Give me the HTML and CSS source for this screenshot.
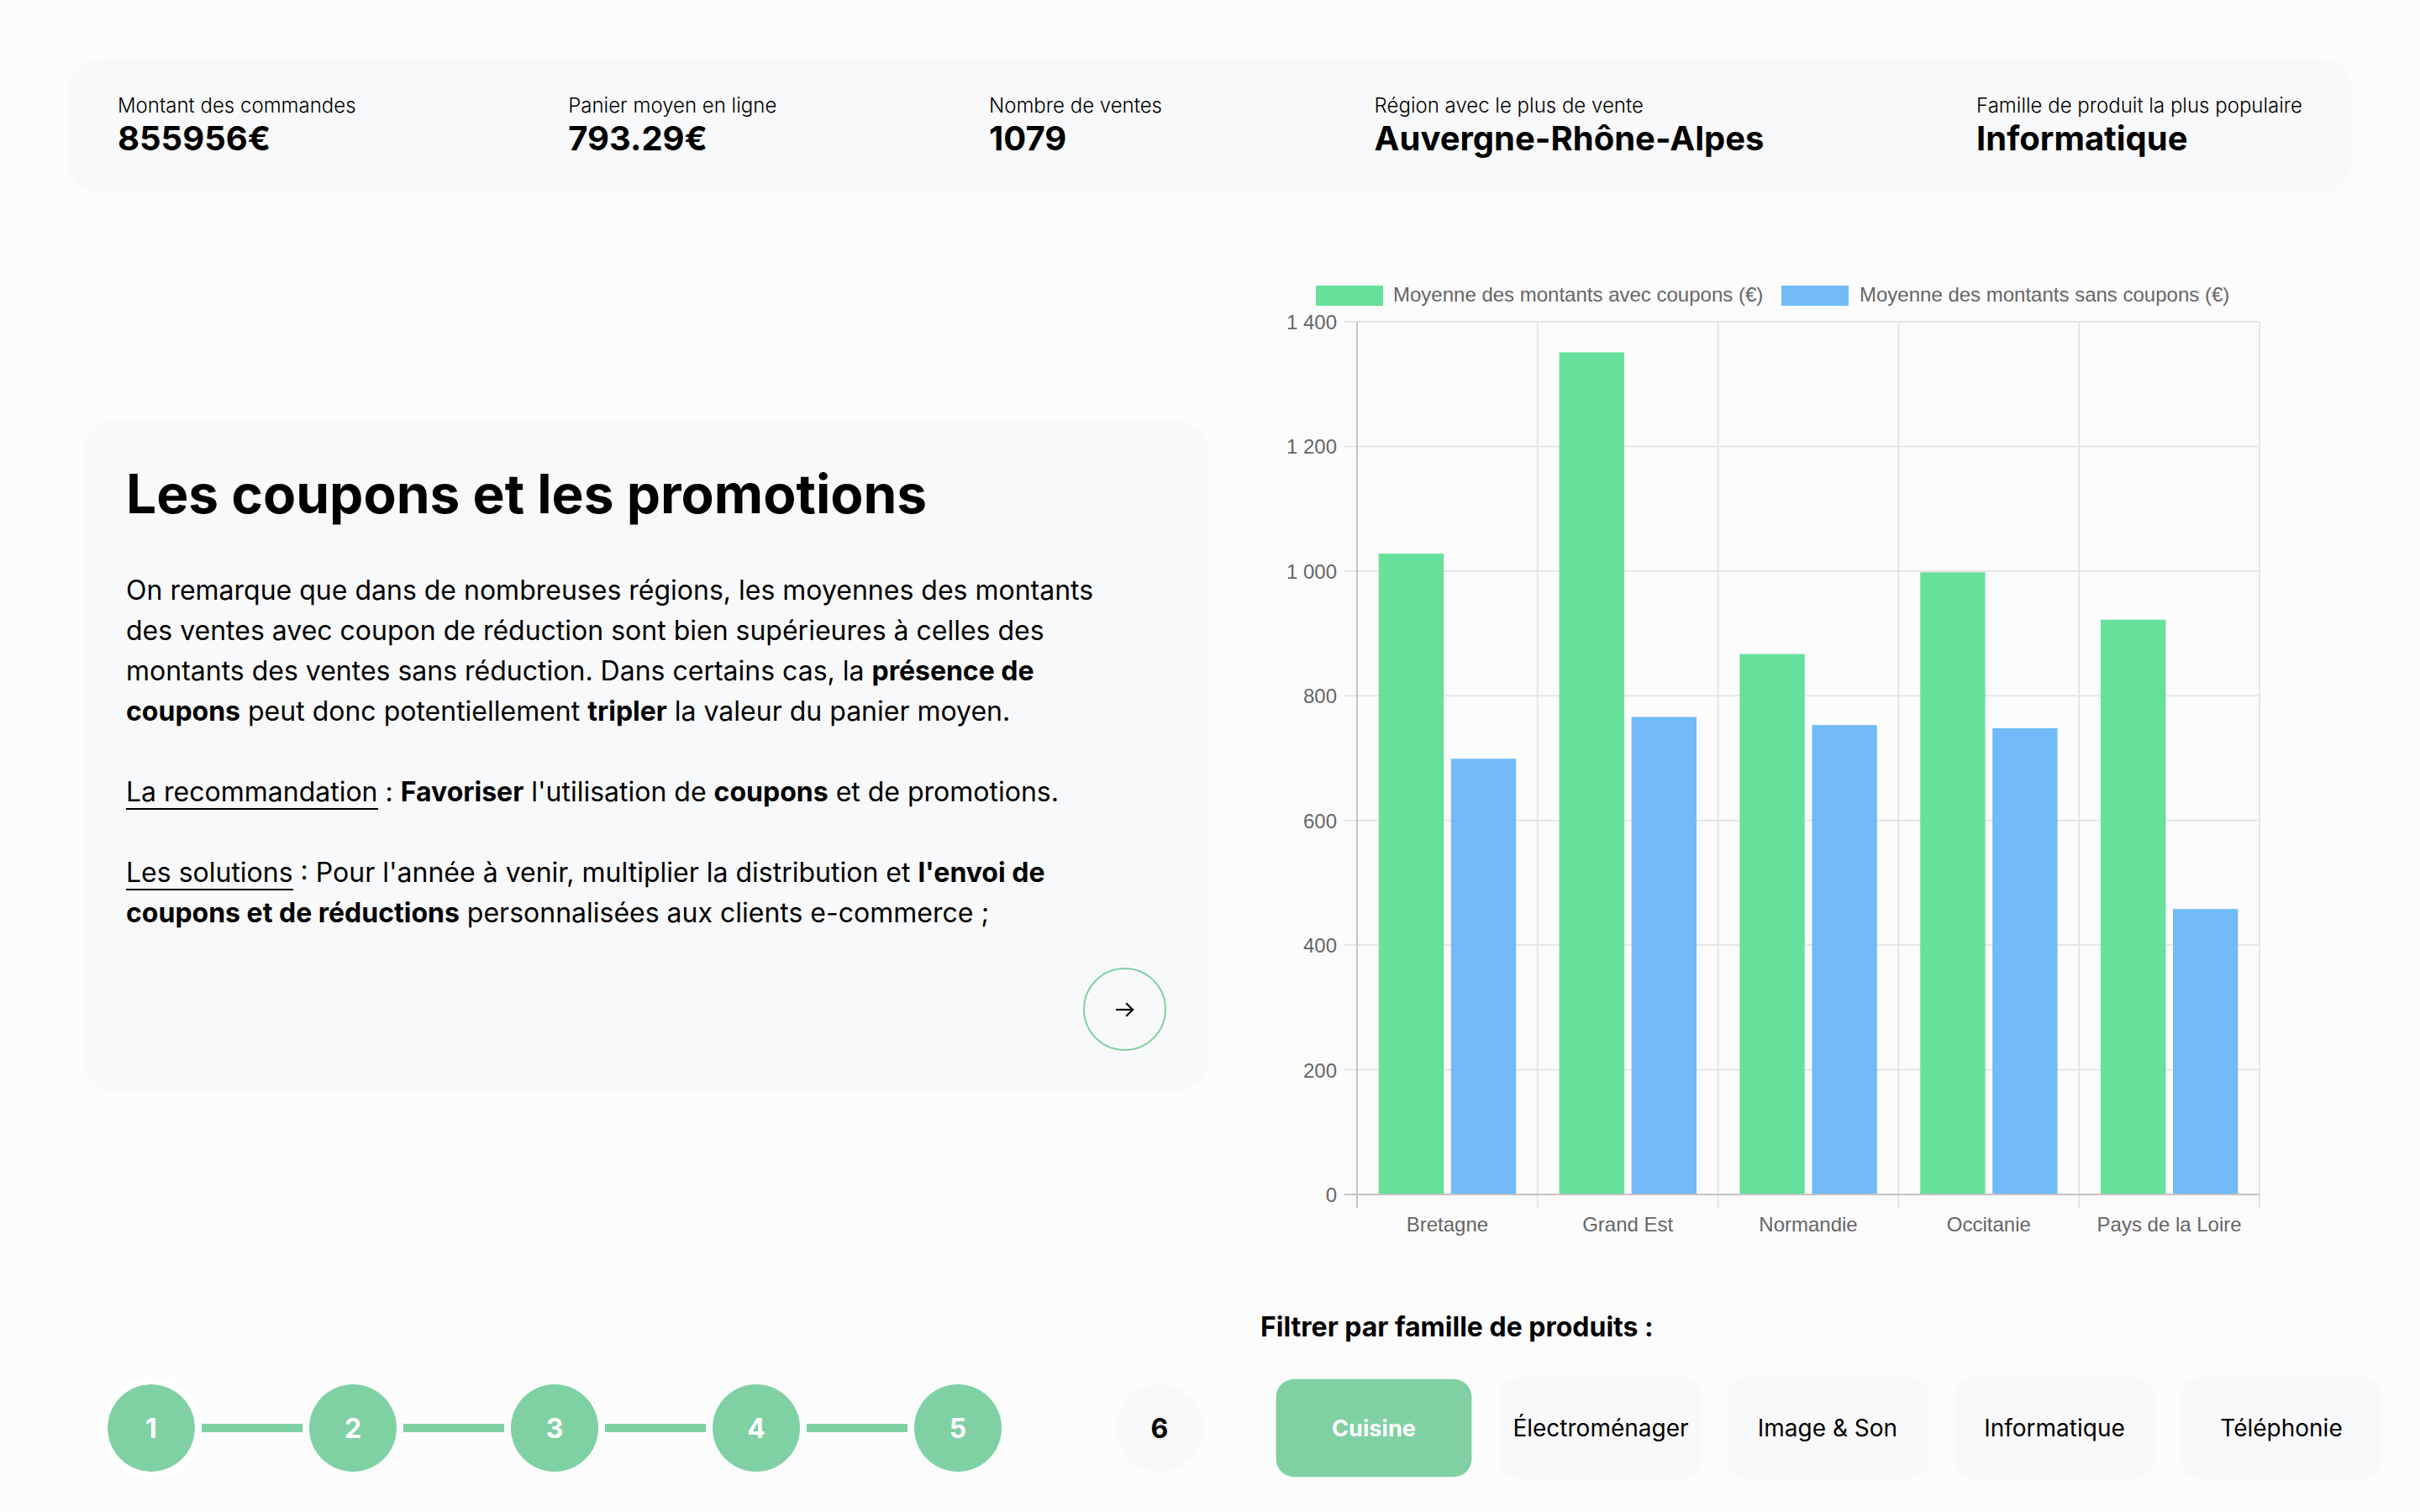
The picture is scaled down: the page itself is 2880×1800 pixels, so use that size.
FILE: index.html
```html
<!DOCTYPE html>
<html lang="fr">
<head>
    <meta charset="utf-8" />
    <title>Tableau de bord des ventes</title>
    <link rel="stylesheet" href="styles.css">
</head>
<body>
    <div class="page">
        <div class="stats">
            <div class="stat">
                <p class="stat-label">Montant des commandes</p>
                <p class="stat-value">855956€</p>
            </div>
            <div class="stat">
                <p class="stat-label">Panier moyen en ligne</p>
                <p class="stat-value">793.29€</p>
            </div>
            <div class="stat">
                <p class="stat-label">Nombre de ventes</p>
                <p class="stat-value">1079</p>
            </div>
            <div class="stat">
                <p class="stat-label">Région avec le plus de vente</p>
                <p class="stat-value">Auvergne-Rhône-Alpes</p>
            </div>
            <div class="stat">
                <p class="stat-label">Famille de produit la plus populaire</p>
                <p class="stat-value">Informatique</p>
            </div>
        </div>

        <div class="main">
            <div class="card">
                <h1 class="card-title">Les coupons et les promotions</h1>
                <p class="card-text">On remarque que dans de nombreuses régions, les moyennes des montants des ventes avec coupon de réduction sont bien supérieures à celles des montants des ventes sans réduction. Dans certains cas, la <b>présence de coupons</b> peut donc potentiellement <b>tripler</b> la valeur du panier moyen.</p>
                <p class="card-text"><span class="u">La recommandation</span> : <b>Favoriser</b> l'utilisation de <b>coupons</b> et de promotions.</p>
                <p class="card-text"><span class="u">Les solutions</span> : Pour l'année à venir, multiplier la distribution et <b>l'envoi de coupons et de réductions</b> personnalisées aux clients e-commerce ;</p>
                <button class="next">
                    <svg width="24" height="24" viewBox="0 0 24 24" fill="none" stroke="#000" stroke-width="2.2" stroke-linecap="square">
                        <path d="M2 12h19" />
                        <path d="M14 5l7 7-7 7" />
                    </svg>
                </button>
            </div>

            <div class="chart">
                <svg width="1200" height="1160" viewBox="0 0 1200 1160">
                    <g class="legend">
                        <rect x="66" y="20" width="80" height="24" fill="#67e09b" />
                        <text x="158" y="39">Moyenne des montants avec coupons (€)</text>
                        <rect x="620" y="20" width="80" height="24" fill="#72bbf8" />
                        <text x="713" y="39">Moyenne des montants sans coupons (€)</text>
                    </g>

                    <g class="grid">
                        <line x1="100" y1="63" x2="1189" y2="63" />
                        <line x1="100" y1="211.4" x2="1189" y2="211.4" />
                        <line x1="100" y1="359.9" x2="1189" y2="359.9" />
                        <line x1="100" y1="508.3" x2="1189" y2="508.3" />
                        <line x1="100" y1="656.7" x2="1189" y2="656.7" />
                        <line x1="100" y1="805.1" x2="1189" y2="805.1" />
                        <line x1="100" y1="953.6" x2="1189" y2="953.6" />
                        <line x1="329.8" y1="63" x2="329.8" y2="1118" />
                        <line x1="544.6" y1="63" x2="544.6" y2="1118" />
                        <line x1="759.4" y1="63" x2="759.4" y2="1118" />
                        <line x1="974.2" y1="63" x2="974.2" y2="1118" />
                        <line x1="1189" y1="63" x2="1189" y2="1118" />
                    </g>

                    <g class="bars">
                        <rect x="140.8" y="339.1" width="77.4" height="762.9" fill="#67e09b" />
                        <rect x="226.8" y="583.2" width="77.4" height="518.8" fill="#72bbf8" />
                        <rect x="355.6" y="99.4" width="77.4" height="1002.6" fill="#67e09b" />
                        <rect x="441.6" y="533.5" width="77.4" height="568.5" fill="#72bbf8" />
                        <rect x="570.4" y="458.6" width="77.4" height="643.4" fill="#67e09b" />
                        <rect x="656.4" y="543.2" width="77.4" height="558.8" fill="#72bbf8" />
                        <rect x="785.2" y="361.3" width="77.4" height="740.7" fill="#67e09b" />
                        <rect x="871.2" y="546.9" width="77.4" height="555.1" fill="#72bbf8" />
                        <rect x="1000" y="417.7" width="77.4" height="684.3" fill="#67e09b" />
                        <rect x="1086" y="762.1" width="77.4" height="339.9" fill="#72bbf8" />
                    </g>

                    <g class="zero">
                        <line x1="100" y1="1102" x2="1189" y2="1102" />
                        <line x1="115" y1="63" x2="115" y2="1118" />
                    </g>

                    <g class="y-labels">
                        <text x="91" y="72">1 400</text>
                        <text x="91" y="220.4">1 200</text>
                        <text x="91" y="368.9">1 000</text>
                        <text x="91" y="517.3">800</text>
                        <text x="91" y="665.7">600</text>
                        <text x="91" y="814.1">400</text>
                        <text x="91" y="962.6">200</text>
                        <text x="91" y="1111">0</text>
                    </g>

                    <g class="x-labels">
                        <text x="222.4" y="1146">Bretagne</text>
                        <text x="437.2" y="1146">Grand Est</text>
                        <text x="652" y="1146">Normandie</text>
                        <text x="866.8" y="1146">Occitanie</text>
                        <text x="1081.6" y="1146">Pays de la Loire</text>
                    </g>
                </svg>
            </div>
        </div>

        <div class="bottom">
            <div class="steps">
                <div class="step current">1</div>
                <div class="link"></div>
                <div class="step">2</div>
                <div class="link"></div>
                <div class="step">3</div>
                <div class="link"></div>
                <div class="step">4</div>
                <div class="link"></div>
                <div class="step">5</div>
                <div class="link off"></div>
                <div class="step todo">6</div>
            </div>

            <div class="filter">
                <h2 class="filter-title">Filtrer par famille de produits :</h2>
                <div class="filter-list">
                    <button class="filter-btn active">Cuisine</button>
                    <button class="filter-btn">Électroménager</button>
                    <button class="filter-btn">Image &amp; Son</button>
                    <button class="filter-btn">Informatique</button>
                    <button class="filter-btn">Téléphonie</button>
                </div>
            </div>
        </div>
    </div>
</body>
</html>
```

FILE: styles.css
```css
body {
    margin: 0;
    background-color: #fcfcfd;
    color: #000;
    font-family: Inter, "Noto Sans", sans-serif;
}
p, h1, h2 {
    margin: 0;
}
.page {
    padding: 70px 80px 0;
}

/* stats bar */
.stats {
    display: flex;
    justify-content: space-between;
    align-items: center;
    height: 160px;
    padding: 0 60px;
    background-color: #f8f9fa;
    border-radius: 40px;
}
.stat-label {
    font-size: 24px;
    font-weight: 300;
}
.stat-value {
    font-size: 40px;
    font-weight: 700;
}

/* card + chart */
.main {
    display: flex;
    align-items: center;
    margin-top: 90px;
}
.card {
    box-sizing: border-box;
    flex: none;
    width: 1338px;
    margin: 0 62px 0 20px;
    padding: 50px;
    background-color: #f8f9fa;
    border-radius: 40px;
    display: flex;
    flex-direction: column;
}
.card-title {
    font-size: 64px;
    line-height: 78px;
    font-weight: 700;
    margin-bottom: 52px;
}
.card-text {
    max-width: 1180px;
    font-size: 32px;
    line-height: 48px;
}
.card-text + .card-text {
    margin-top: 48px;
}
.card-text b {
    font-weight: 700;
}
.u {
    border-bottom: 2px solid #000;
}
.next {
    align-self: flex-end;
    width: 99px;
    height: 99px;
    margin-top: 41px;
    padding: 0;
    border: 2px solid #7fd1a3;
    border-radius: 50%;
    background: transparent;
    display: flex;
    align-items: center;
    justify-content: center;
}
.chart {
    flex: none;
}
.chart svg {
    display: block;
}
.chart text {
    font-family: "Liberation Sans", Arial, sans-serif;
    font-size: 24px;
    fill: #666;
}
.legend text {
    font-size: 24px;
}
.grid line {
    stroke: #e6e6e6;
    stroke-width: 2;
}
.zero line {
    stroke: #c4c4c4;
    stroke-width: 2;
}
.y-labels text {
    text-anchor: end;
}
.x-labels text {
    text-anchor: middle;
}

/* steps + filter */
.bottom {
    display: flex;
    align-items: flex-end;
    margin-top: 80px;
}
.steps {
    flex: none;
    box-sizing: border-box;
    width: 1360px;
    padding-left: 40px;
    margin-bottom: 15px;
    display: flex;
    align-items: center;
}
.step {
    box-sizing: border-box;
    width: 120px;
    height: 120px;
    border: 8px solid transparent;
    border-radius: 50%;
    background-color: #7fd1a3;
    background-clip: padding-box;
    color: #fff;
    font-size: 32px;
    font-weight: 700;
    display: flex;
    align-items: center;
    justify-content: center;
}
.step.current {
    border-color: #fff;
}
.step.todo {
    background-color: #f8f9fa;
    color: #000;
}
.link {
    width: 120px;
    height: 10px;
    background-color: #7fd1a3;
}
.link.off {
    background-color: transparent;
}
.filter {
    margin-left: 60px;
}
.filter-title {
    font-size: 32px;
    line-height: 40px;
    font-weight: 700;
    margin-bottom: 25px;
}
.filter-list {
    display: flex;
}
.filter-btn {
    flex: none;
    width: 240px;
    height: 120px;
    margin: 15px;
    border: none;
    border-radius: 22px;
    background-color: #f8f9fa;
    color: #000;
    font-family: Inter, "Noto Sans", sans-serif;
    font-size: 28px;
}
.filter-btn.active {
    background-color: #7fd1a3;
    color: #fff;
    font-weight: 700;
    transform: scale(0.97);
}
```
